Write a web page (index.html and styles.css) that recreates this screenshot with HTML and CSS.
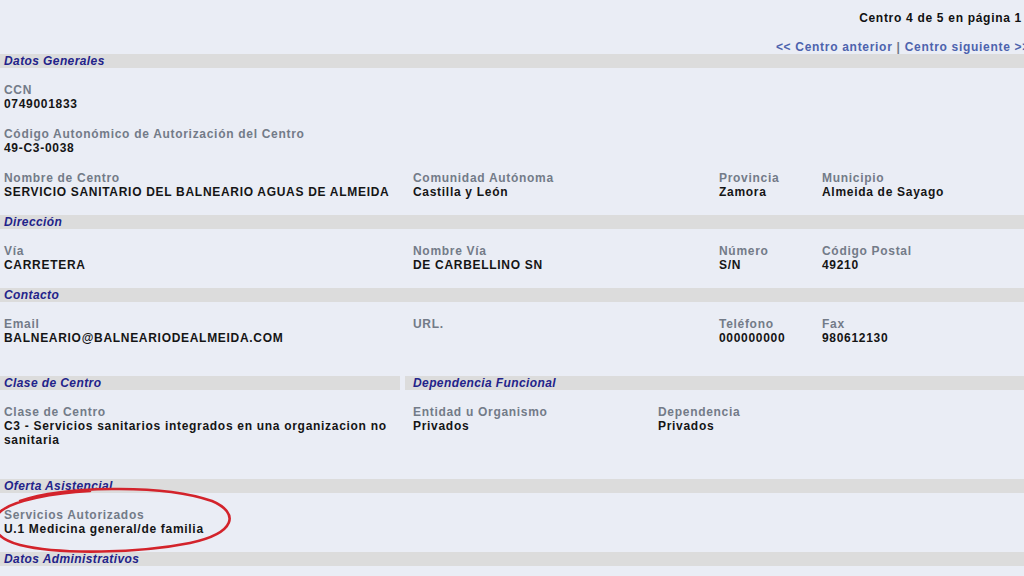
FILE: index.html
```html
<!DOCTYPE html>
<html lang="es">
<head>
<meta charset="utf-8">
<title>Centro 4 de 5</title>
<link rel="stylesheet" href="styles.css">
</head>
<body>
<div class="page">
  <div class="pager">Centro 4 de 5 en página 1</div>
  <div class="nav"><a href="#">&lt;&lt; Centro anterior</a> <span class="sep">|</span> <a href="#">Centro siguiente &gt;&gt;</a></div>

  <div class="bar"><span>Datos Generales</span></div>
  <div class="section">
    <div class="row">
      <div class="field"><div class="lbl">CCN</div><div class="val">0749001833</div></div>
    </div>
    <div class="row">
      <div class="field"><div class="lbl">Código Autonómico de Autorización del Centro</div><div class="val">49-C3-0038</div></div>
    </div>
    <div class="row cols4">
      <div class="field"><div class="lbl">Nombre de Centro</div><div class="val">SERVICIO SANITARIO DEL BALNEARIO AGUAS DE ALMEIDA</div></div>
      <div class="field"><div class="lbl">Comunidad Autónoma</div><div class="val">Castilla y León</div></div>
      <div class="field"><div class="lbl">Provincia</div><div class="val">Zamora</div></div>
      <div class="field"><div class="lbl">Municipio</div><div class="val">Almeida de Sayago</div></div>
    </div>
  </div>

  <div class="bar"><span>Dirección</span></div>
  <div class="section">
    <div class="row cols4">
      <div class="field"><div class="lbl">Vía</div><div class="val">CARRETERA</div></div>
      <div class="field"><div class="lbl">Nombre Vía</div><div class="val">DE CARBELLINO SN</div></div>
      <div class="field"><div class="lbl">Número</div><div class="val">S/N</div></div>
      <div class="field"><div class="lbl">Código Postal</div><div class="val">49210</div></div>
    </div>
  </div>

  <div class="bar"><span>Contacto</span></div>
  <div class="section extra">
    <div class="row cols4">
      <div class="field"><div class="lbl">Email</div><div class="val">BALNEARIO@BALNEARIODEALMEIDA.COM</div></div>
      <div class="field"><div class="lbl">URL.</div><div class="val"></div></div>
      <div class="field"><div class="lbl">Teléfono</div><div class="val">000000000</div></div>
      <div class="field"><div class="lbl">Fax</div><div class="val">980612130</div></div>
    </div>
  </div>

  <div class="bar-split">
    <div class="bar bar-left"><span>Clase de Centro</span></div>
    <div class="bar bar-right"><span>Dependencia Funcional</span></div>
  </div>
  <div class="section extra clase">
    <div class="row cols3">
      <div class="field"><div class="lbl">Clase de Centro</div><div class="val wrap">C3 - Servicios sanitarios integrados en una organizacion no sanitaria</div></div>
      <div class="field"><div class="lbl">Entidad u Organismo</div><div class="val">Privados</div></div>
      <div class="field"><div class="lbl">Dependencia</div><div class="val">Privados</div></div>
    </div>
  </div>

  <div class="bar"><span>Oferta Asistencial</span></div>
  <div class="section">
    <div class="row">
      <div class="field"><div class="lbl">Servicios Autorizados</div><div class="val">U.1 Medicina general/de familia</div></div>
    </div>
  </div>

  <div class="bar"><span>Datos Administrativos</span></div>

  <svg class="circle" width="260" height="80" viewBox="0 0 260 80" aria-hidden="true">
    <path d="M30 18 C 70 4, 170 0, 222 18 C 250 30, 246 50, 200 60 C 150 70, 70 72, 30 62 C 0 54, -2 36, 14 26 C 26 18, 60 10, 100 8" fill="none" stroke="#d3232b" stroke-width="2.6" stroke-linecap="round"/>
  </svg>
</div>
</body>
</html>
```

FILE: styles.css
```css
html, body {
  margin: 0;
  padding: 0;
  background: #eaedf5;
}
body {
  font-family: "Liberation Sans", Arial, sans-serif;
  font-size: 12px;
  letter-spacing: 0.7px;
  line-height: 14px;
  color: #111;
  overflow: hidden;
}
.page {
  position: relative;
  width: 1024px;
  height: 576px;
  overflow: hidden;
}
.pager {
  text-align: right;
  font-weight: bold;
  color: #111;
  padding: 11px 2px 0 0;
  height: 14px;
}
.nav {
  text-align: right;
  font-weight: bold;
  margin-top: 15px;
  margin-right: -6px;
  height: 14px;
  white-space: nowrap;
}
.nav a {
  color: #4d63ad;
  text-decoration: none;
}
.nav .sep {
  color: #6f7888;
}
.bar {
  background: #dcdcdc;
  height: 14px;
  padding-left: 4px;
}
.bar span {
  color: #23238a;
  font-weight: bold;
  font-style: italic;
  letter-spacing: 0.4px;
}
.bar-split {
  display: flex;
  gap: 5px;
}
.bar-left {
  width: 396px;
}
.bar-right {
  flex: 1;
  padding-left: 8px;
}
.section {
  padding: 15px 0 16px 0;
  display: flex;
  flex-direction: column;
  gap: 16px;
}
.section.extra {
  padding-bottom: 31px;
}
.section.clase {
  padding-bottom: 32px;
}
.row {
  padding-left: 4px;
  display: grid;
  grid-template-columns: 1fr;
}
.row.cols4 {
  grid-template-columns: 409px 306px 103px 1fr;
}
.row.cols3 {
  grid-template-columns: 409px 245px 1fr;
}
.lbl {
  color: #737b88;
  font-weight: bold;
  white-space: nowrap;
}
.val {
  font-weight: bold;
  color: #151515;
  min-height: 14px;
  white-space: nowrap;
}
.val.wrap {
  white-space: normal;
  width: 390px;
}
.circle {
  position: absolute;
  left: -10px;
  top: 483px;
}
```
